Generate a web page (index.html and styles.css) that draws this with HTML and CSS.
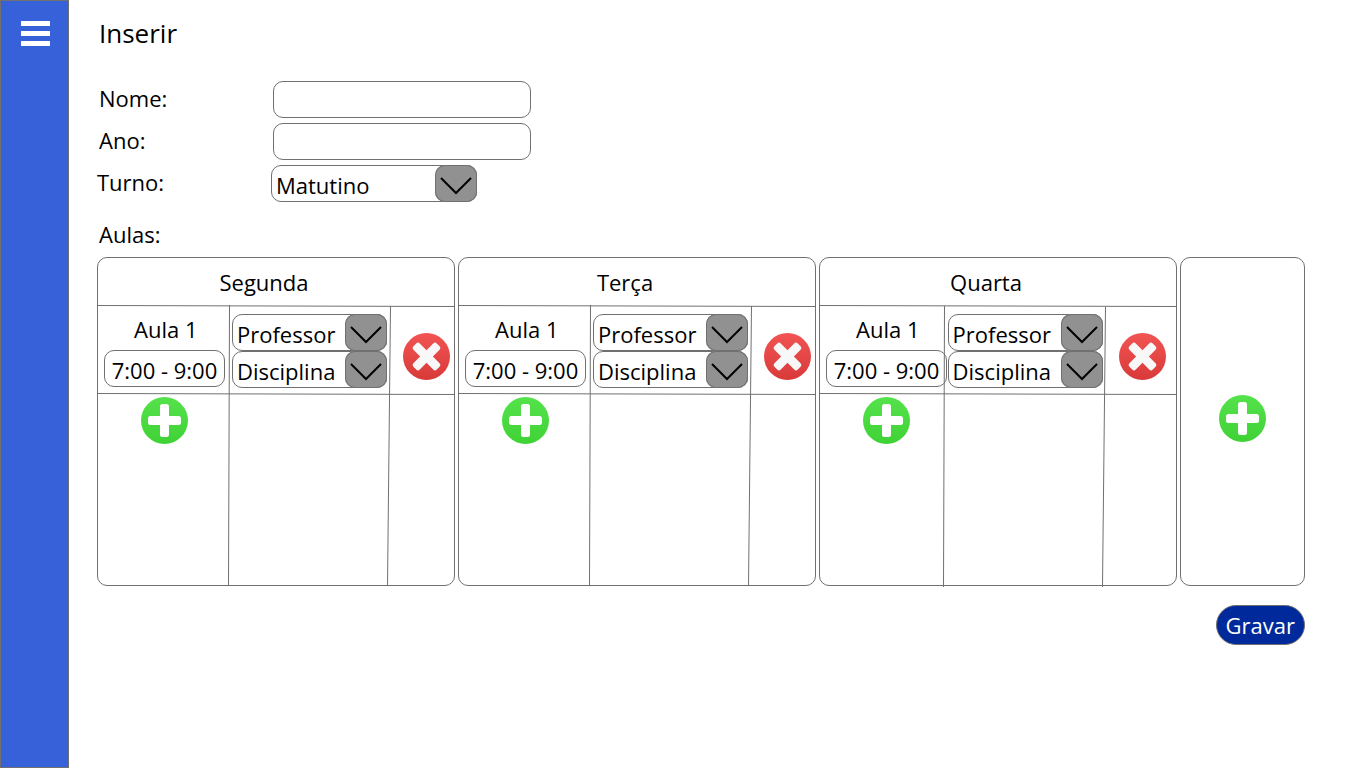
FILE: index.html
```html
<!DOCTYPE html>
<html lang="pt-BR">
<head>
<meta charset="utf-8">
<meta name="viewport" content="width=device-width, initial-scale=1">
<title>Inserir</title>
<link rel="stylesheet" href="styles.css">
</head>
<body>
<svg class="defs" width="0" height="0" aria-hidden="true">
  <defs>
    <linearGradient id="green" x1="0" y1="0" x2="0" y2="1"><stop offset="0" stop-color="#55e24c"/><stop offset="1" stop-color="#3fd235"/></linearGradient>
    <linearGradient id="red" x1="0" y1="0" x2="0" y2="1"><stop offset="0" stop-color="#f25454"/><stop offset="1" stop-color="#d83a3a"/></linearGradient>
    <path id="cross" d="M9.500 19H19V9.500Q19 7 21.500 7h4Q28 7 28 9.500V19h9.500Q40 19 40 21.500v4Q40 28 37.500 28H28v9.500Q28 40 25.500 40h-4Q19 40 19 37.500V28H9.500Q7 28 7 25.500v-4Q7 19 9.500 19z"/>
    <symbol id="add" viewBox="0 0 47 47"><circle cx="23.5" cy="23.5" r="23.5" fill="url(#green)"/><use href="#cross" fill="#fff"/></symbol>
    <symbol id="remove" viewBox="0 0 47 47"><circle cx="23.5" cy="23.5" r="23.5" fill="url(#red)"/><use href="#cross" fill="#f8f8f8" transform="rotate(45 23.5 23.5)"/></symbol>
    <symbol id="chevron" viewBox="0 0 42 37"><path d="M6 13l15 15 15-15" fill="none" stroke="#000" stroke-width="2"/></symbol>
  </defs>
</svg>
<div class="app">
  <nav class="rail">
    <button class="menu" type="button" aria-label="Menu">
      <svg width="29" height="25" viewBox="0 0 29 25"><path d="M0 0h29v5H0zM0 10h29v5H0zM0 20h29v5H0z" fill="#fff"/></svg>
    </button>
  </nav>
  <main class="main">
    <h1 class="title">Inserir</h1>
    <form>
      <div class="fields">
        <div class="field field-text"><label for="nome">Nome:</label><input class="box" id="nome" type="text"></div>
        <div class="field field-text"><label for="ano">Ano:</label><input class="box" id="ano" type="text"></div>
        <div class="field"><label for="turno">Turno:</label>
          <div class="picker picker-shift"><select class="box" id="turno"><option>Matutino</option></select><svg class="arrow"><use href="#chevron"/></svg></div>
        </div>
      </div>
      <h2 class="subtitle">Aulas:</h2>
      <div class="days">
        <section class="card">
          <table class="day">
            <colgroup><col class="col-time"><col class="col-pick"><col></colgroup>
            <tr class="head"><th colspan="3">Segunda</th></tr>
            <tr class="lesson">
              <td><label class="lesson-name" for="h1">Aula 1</label><input class="box time" id="h1" type="text" value="7:00 - 9:00"></td>
              <td>
                <div class="picker"><select class="box" aria-label="Professor"><option>Professor</option></select><svg class="arrow"><use href="#chevron"/></svg></div>
                <div class="picker"><select class="box" aria-label="Disciplina"><option>Disciplina</option></select><svg class="arrow"><use href="#chevron"/></svg></div>
              </td>
              <td><button class="round remove" type="button" aria-label="Remover aula"><svg><use href="#remove"/></svg></button></td>
            </tr>
            <tr class="rest"><td><button class="round add" type="button" aria-label="Adicionar aula"><svg><use href="#add"/></svg></button></td><td></td><td></td></tr>
          </table>
          <svg class="rules" viewBox="0 0 358 329" preserveAspectRatio="none" aria-hidden="true"><path d="M0 48.500L358 49.500M0 136.500L358 137.500M132.500 48L131.500 329M293.500 49L290.500 329"/></svg>
        </section>
        <section class="card">
          <table class="day">
            <colgroup><col class="col-time"><col class="col-pick"><col></colgroup>
            <tr class="head"><th colspan="3">Terça</th></tr>
            <tr class="lesson">
              <td><label class="lesson-name" for="h2">Aula 1</label><input class="box time" id="h2" type="text" value="7:00 - 9:00"></td>
              <td>
                <div class="picker"><select class="box" aria-label="Professor"><option>Professor</option></select><svg class="arrow"><use href="#chevron"/></svg></div>
                <div class="picker"><select class="box" aria-label="Disciplina"><option>Disciplina</option></select><svg class="arrow"><use href="#chevron"/></svg></div>
              </td>
              <td><button class="round remove" type="button" aria-label="Remover aula"><svg><use href="#remove"/></svg></button></td>
            </tr>
            <tr class="rest"><td><button class="round add" type="button" aria-label="Adicionar aula"><svg><use href="#add"/></svg></button></td><td></td><td></td></tr>
          </table>
          <svg class="rules" viewBox="0 0 358 329" preserveAspectRatio="none" aria-hidden="true"><path d="M0 48.500L358 49.500M0 136.500L358 137.500M132.500 48L131.500 329M293.500 49L290.500 329"/></svg>
        </section>
        <section class="card">
          <table class="day day-narrow">
            <colgroup><col class="col-time"><col class="col-pick"><col></colgroup>
            <tr class="head"><th colspan="3">Quarta</th></tr>
            <tr class="lesson">
              <td><label class="lesson-name" for="h3">Aula 1</label><input class="box time" id="h3" type="text" value="7:00 - 9:00"></td>
              <td>
                <div class="picker"><select class="box" aria-label="Professor"><option>Professor</option></select><svg class="arrow"><use href="#chevron"/></svg></div>
                <div class="picker"><select class="box" aria-label="Disciplina"><option>Disciplina</option></select><svg class="arrow"><use href="#chevron"/></svg></div>
              </td>
              <td><button class="round remove" type="button" aria-label="Remover aula"><svg><use href="#remove"/></svg></button></td>
            </tr>
            <tr class="rest"><td><button class="round add" type="button" aria-label="Adicionar aula"><svg><use href="#add"/></svg></button></td><td></td><td></td></tr>
          </table>
          <svg class="rules" viewBox="0 0 358 329" preserveAspectRatio="none" aria-hidden="true"><path d="M0 48.500L358 49.500M0 136.500L358 137.500M125.500 49L124.500 330M286.500 50L283.500 330"/></svg>
        </section>
        <section class="card card-add">
          <button class="round" type="button" aria-label="Adicionar dia"><svg><use href="#add"/></svg></button>
        </section>
      </div>
      <div class="actions"><button class="save" type="submit">Gravar</button></div>
    </form>
  </main>
</div>
</body>
</html>
```
FILE: styles.css
```css
* { box-sizing: border-box; }
body {
  margin: 0;
  background: #fff;
  color: #000;
  font: 22px/32px "Open Sans", "Noto Sans", sans-serif;
}
.defs { position: absolute; }
.app { display: flex; min-height: 100vh; }
.rail {
  flex: none;
  width: 69px;
  padding: 20px;
  background: #3661d8;
  border: 1px solid #707070;
}
button, input, select { font: inherit; color: inherit; margin: 0; }
.menu { display: block; padding: 0; border: 0; background: none; cursor: pointer; }
.menu svg { display: block; }
.main { flex: 1; min-width: 0; padding: 14px 61px 32px 28px; }
.title { margin: 0 0 29px; padding-left: 2px; font-size: 26px; font-weight: 400; line-height: 38px; }

.fields { display: flex; flex-direction: column; gap: 5px; }
.field { display: flex; align-items: center; }
.field > label { width: 174px; padding-bottom: 4px; }
.field-text { padding-left: 2px; }
.field-text .box { width: 258px; padding: 0 10px; }
.box {
  display: block;
  height: 37px;
  border: 1px solid #707070;
  border-radius: 10px;
  background: transparent;
}
.picker { position: relative; width: 155px; }
.picker-shift { width: 206px; }
.picker select {
  appearance: none;
  width: 100%;
  padding: 2px 42px 0 4px;
}
.arrow {
  position: absolute;
  top: 0;
  right: 0;
  width: 42px;
  height: 37px;
  border-radius: 10px;
  background: #919191;
  box-shadow: inset 0 0 0 1px #707070;
  pointer-events: none;
}

.subtitle { margin: 17px 0 8px; padding-left: 2px; font-size: 22px; font-weight: 400; line-height: 30px; }
.days {
  display: grid;
  grid-template-columns: 358fr 358fr 358fr 125fr;
  gap: 3px;
}
.card {
  position: relative;
  min-height: 329px;
  border: 1px solid #707070;
  border-radius: 10px;
}
.card-add { display: flex; align-items: center; justify-content: center; padding-bottom: 6px; }
.day { width: 100%; border-collapse: collapse; table-layout: fixed; }
.day th, .day td { padding: 0; vertical-align: top; text-align: left; }
.col-time { width: 36.8%; }
.col-pick { width: 45%; }
.day-narrow .col-time { width: 35%; }
.head { height: 48px; }
.day .head th { padding-right: 24px; font-weight: 400; text-align: center; vertical-align: middle; }
.lesson { height: 88px; }
.day .lesson td { padding: 8px 0 0 3px; }
.lesson-name { display: block; padding: 0 0 6px 33px; line-height: 30px; }
.time { width: 121px; margin-left: 3px; padding: 2px 0 0; text-align: center; }
.rest { height: 190px; }
.round { display: block; width: 47px; height: 47px; padding: 0; border: 0; border-radius: 50%; background: none; cursor: pointer; }
.round svg { display: block; width: 47px; height: 47px; }
.remove { margin: 19px 0 0 11px; }
.add { margin: 3px 0 0 43px; }
.rules {
  position: absolute;
  inset: -1px;
  width: calc(100% + 2px);
  height: calc(100% + 2px);
  overflow: visible;
  pointer-events: none;
}
.rules path { fill: none; stroke: #707070; vector-effect: non-scaling-stroke; }

.actions { display: flex; justify-content: flex-end; margin-top: 19px; }
.save {
  height: 40px;
  padding: 0 9px;
  border: 1px solid #707070;
  border-radius: 20px;
  background: #002a9c;
  color: #fff;
  cursor: pointer;
}
```
